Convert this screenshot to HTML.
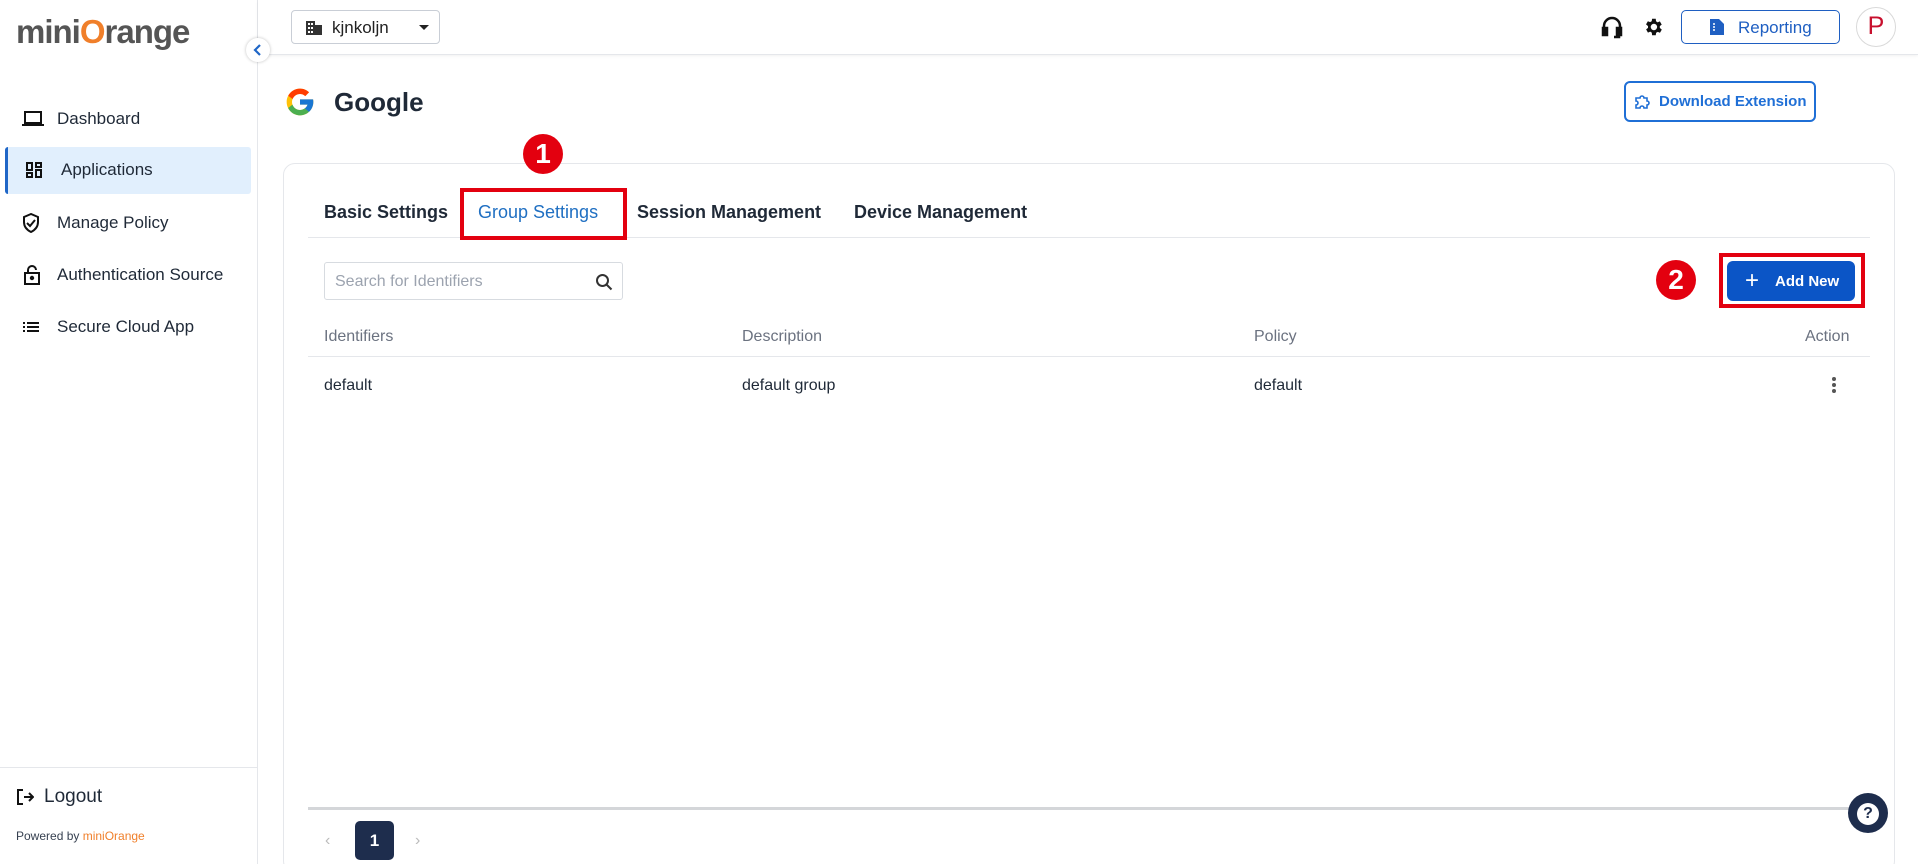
<!DOCTYPE html>
<html><head><meta charset="utf-8"><style>
*{box-sizing:border-box;margin:0;padding:0}
html,body{width:1918px;height:864px;overflow:hidden}
body{background:#fff;font-family:"Liberation Sans",Arial,sans-serif;color:#1f2937;position:relative}
.abs{position:absolute}
.side{left:0;top:0;width:258px;height:864px;border-right:1px solid #e5e7eb;background:#fff}
.nav{position:absolute;left:0;width:258px;height:46px;display:flex;align-items:center;font-size:17px;color:#1f2937}
.nav svg{position:absolute;left:22px}
.nav span{position:absolute;left:57px;top:13px}
.hdr{left:258px;top:0;width:1660px;height:55px;border-bottom:1px solid #e5e7eb;box-shadow:0 1px 3px rgba(0,0,0,.06)}
.tab{position:absolute;top:202px;font-size:18px;font-weight:bold;color:#1f2937}
.th{position:absolute;top:328px;font-size:16px;color:#6b7280}
.td{position:absolute;top:377px;font-size:16px;color:#1f2937}
.badge{position:absolute;width:40px;height:40px;border-radius:50%;background:#e3000f;color:#fff;font-size:28px;font-weight:bold;text-align:center;line-height:40px}
</style></head><body>

<div class="abs side">
  <div class="abs" style="left:16px;top:13px;font-size:33px;font-weight:bold;color:#555;letter-spacing:-1px">mini<span style="color:#f07f2a">O</span>range</div>
  <div class="nav" style="top:96px"><svg width="22" height="18" viewBox="0 0 22 18"><rect x="3" y="2" width="16" height="11" fill="none" stroke="#111" stroke-width="2"/><rect x="0" y="14" width="22" height="2" fill="#111"/></svg><span>Dashboard</span></div>
  <div class="abs" style="left:5px;top:147px;width:246px;height:47px;background:#e1effd;border-left:3px solid #1f66c7;border-radius:3px"></div>
  <div class="nav" style="top:147px"><svg style="left:26px" width="16" height="16" viewBox="0 0 16 16" fill="none" stroke="#111" stroke-width="2"><rect x="1" y="1" width="5" height="7"/><rect x="10" y="1" width="5" height="4"/><rect x="1" y="11" width="5" height="4"/><rect x="10" y="8" width="5" height="7"/></svg><span style="left:61px">Applications</span></div>
  <div class="nav" style="top:200px"><svg style="left:22px" width="18" height="20" viewBox="0 0 18 20" fill="none" stroke="#111" stroke-width="2"><path d="M9 1L2 4v5c0 5 3 8 7 10 4-2 7-5 7-10V4z"/><path d="M5 10l3 3 5-6"/></svg><span>Manage Policy</span></div>
  <div class="nav" style="top:252px"><svg style="left:24px" width="16" height="20" viewBox="0 0 16 20" fill="none" stroke="#111" stroke-width="2"><rect x="1" y="8" width="14" height="11"/><path d="M4 8V5a4 4 0 018 0"/><circle cx="8" cy="13" r="1.2" fill="#111"/></svg><span>Authentication Source</span></div>
  <div class="nav" style="top:304px"><svg style="left:23px" width="16" height="12" viewBox="0 0 16 12" fill="#111"><rect x="0" y="1" width="2" height="2"/><rect x="4" y="1" width="12" height="2"/><rect x="0" y="5" width="2" height="2"/><rect x="4" y="5" width="12" height="2"/><rect x="0" y="9" width="2" height="2"/><rect x="4" y="9" width="12" height="2"/></svg><span>Secure Cloud App</span></div>
  <div class="abs" style="left:0;top:767px;width:258px;height:1px;background:#e5e7eb"></div>
  <svg class="abs" style="left:16px;top:788px" width="18" height="18" viewBox="0 0 18 18" fill="none" stroke="#111" stroke-width="2"><path d="M7 2H2v14h5M8 9h9M13 5l4 4-4 4"/></svg>
  <div class="abs" style="left:44px;top:786px;font-size:19px;color:#1f2937">Logout</div>
  <div class="abs" style="left:16px;top:829px;font-size:12px;color:#374151">Powered by <span style="color:#f07f2a">miniOrange</span></div>
</div>
<div class="abs" style="left:246px;top:38px;width:24px;height:24px;border-radius:50%;background:#fff;box-shadow:0 0 3px rgba(0,0,0,.25);z-index:3"><svg width="24" height="24" viewBox="0 0 24 24"><path d="M14 7l-5 5 5 5" fill="none" stroke="#1f66c7" stroke-width="2.2"/></svg></div>

<div class="abs hdr">
  <div class="abs" style="left:33px;top:10px;width:149px;height:34px;border:1px solid #c9ced6;border-radius:4px">
    <svg class="abs" style="left:14px;top:10px" width="16" height="14" viewBox="0 0 16 14" fill="#333"><path d="M0 0h9v14H0zM9 4h7v10H9z"/><path d="M2 2h2v2H2zM5 2h2v2H5zM2 6h2v2H2zM5 6h2v2H5zM2 10h2v2H2zM5 10h2v2H5z" fill="#fff"/></svg>
    <div class="abs" style="left:40px;top:7px;font-size:17px;color:#222">kjnkoljn</div>
    <div class="abs" style="left:127px;top:14px;border-left:5px solid transparent;border-right:5px solid transparent;border-top:5px solid #222"></div>
  </div>
  <svg class="abs" style="left:1343px;top:15px" width="22" height="24" viewBox="0 0 22 24" fill="none" stroke="#111" stroke-width="2.5"><path d="M3 15V11a8 8 0 0116 0v4"/><rect x="2" y="13" width="4" height="7" fill="#111"/><rect x="16" y="13" width="4" height="7" fill="#111"/><path d="M18 20v2h-5"/></svg>
  <svg class="abs" style="left:1384px;top:16px" width="22" height="22" viewBox="0 0 24 24"><path fill="#111" d="M19.4 13a7.5 7.5 0 000-2l2.1-1.6-2-3.5-2.5 1a7 7 0 00-1.7-1L15 3h-4l-.4 2.7a7 7 0 00-1.7 1l-2.5-1-2 3.5L6.6 11a7.5 7.5 0 000 2l-2.1 1.6 2 3.5 2.5-1a7 7 0 001.7 1L11 21h4l.4-2.7a7 7 0 001.7-1l2.5 1 2-3.5zM13 15.5A3.5 3.5 0 1113 8.5a3.5 3.5 0 010 7z"/></svg>
  <div class="abs" style="left:1423px;top:10px;width:159px;height:34px;border:1.5px solid #1f5fc2;border-radius:5px">
    <svg class="abs" style="left:28px;top:8px" width="14" height="16" viewBox="0 0 14 16"><path d="M0 0h9l5 5v11H0z" fill="#1f5fc2"/><path d="M3 5h2M3 8h2M3 11h2" stroke="#fff" stroke-width="1.5"/></svg>
    <div class="abs" style="left:56px;top:7px;font-size:17px;color:#1f5fc2;font-weight:500">Reporting</div>
  </div>
  <div class="abs" style="left:1598px;top:7px;width:40px;height:40px;border-radius:50%;border:1.5px solid #d9d9d9;text-align:center;line-height:37px;font-size:25px;color:#c8102e">P</div>
</div>

<svg class="abs" style="left:284px;top:86px" width="32" height="32" viewBox="0 0 48 48"><path fill="#FFC107" d="M43.6 20H24v8h11.3C33.7 32.7 29.2 36 24 36c-6.6 0-12-5.4-12-12s5.4-12 12-12c3.1 0 5.8 1.2 7.9 3.1l5.7-5.7C34 6.1 29.3 4 24 4 13 4 4 13 4 24s9 20 20 20 20-9 20-20c0-1.3-.1-2.7-.4-4z"/><path fill="#FF3D00" d="M6.3 14.7l6.6 4.8C14.7 15.1 19 12 24 12c3.1 0 5.8 1.2 7.9 3.1l5.7-5.7C34 6.1 29.3 4 24 4 16.3 4 9.7 8.3 6.3 14.7z"/><path fill="#4CAF50" d="M24 44c5.2 0 9.9-2 13.4-5.2l-6.2-5.2C29.2 35.1 26.7 36 24 36c-5.2 0-9.6-3.3-11.3-8l-6.5 5C9.5 39.6 16.2 44 24 44z"/><path fill="#1976D2" d="M43.6 20H24v8h11.3c-.8 2.2-2.2 4.2-4.1 5.6l6.2 5.2C37 39.2 44 34 44 24c0-1.3-.1-2.7-.4-4z"/></svg>
<div class="abs" style="left:334px;top:87px;font-size:26px;font-weight:bold;color:#1f2937">Google</div>

<div class="abs" style="left:1624px;top:81px;width:192px;height:41px;border:2px solid #1f6fd6;border-radius:6px">
  <svg class="abs" style="left:8px;top:10px" width="18" height="18" viewBox="0 0 18 18" fill="none" stroke="#1f6fd6" stroke-width="1.6"><path d="M2 5h4a2 2 0 014 0h3v3a2 2 0 010 4v3h-3a2 2 0 00-4 0H2v-3a2 2 0 000-4z"/></svg>
  <div class="abs" style="left:33px;top:10px;font-size:15px;color:#1f6fd6;font-weight:bold">Download Extension</div>
</div>

<div class="abs" style="left:283px;top:163px;width:1612px;height:710px;border:1px solid #e5e7eb;border-radius:12px"></div>
<div class="tab" style="left:324px">Basic Settings</div>
<div class="tab" style="left:478px;color:#1f6fc2;font-weight:500">Group Settings</div>
<div class="tab" style="left:637px">Session Management</div>
<div class="tab" style="left:854px">Device Management</div>
<div class="abs" style="left:308px;top:237px;width:1562px;height:1px;background:#e5e7eb"></div>
<div class="abs" style="left:460px;top:188px;width:167px;height:52px;border:4px solid #e3000f"></div>
<div class="badge" style="left:523px;top:134px">1</div>

<div class="abs" style="left:324px;top:262px;width:299px;height:38px;border:1px solid #d7dbe0;border-radius:3px">
  <div class="abs" style="left:10px;top:10px;font-size:16px;color:#9ca3af">Search for Identifiers</div>
  <svg class="abs" style="left:270px;top:10px" width="18" height="18" viewBox="0 0 18 18" fill="none" stroke="#333" stroke-width="2"><circle cx="7.5" cy="7.5" r="5.5"/><path d="M11.5 11.5l5 5"/></svg>
</div>
<div class="badge" style="left:1656px;top:260px">2</div>
<div class="abs" style="left:1719px;top:253px;width:146px;height:55px;border:4px solid #e3000f"></div>
<div class="abs" style="left:1727px;top:261px;width:128px;height:40px;background:#0b55c6;border-radius:6px;color:#fff">
  <div class="abs" style="left:18px;top:6px;font-size:24px;font-weight:300">+</div>
  <div class="abs" style="left:48px;top:12px;font-size:15px;font-weight:bold">Add New</div>
</div>

<div class="th" style="left:324px">Identifiers</div>
<div class="th" style="left:742px">Description</div>
<div class="th" style="left:1254px">Policy</div>
<div class="th" style="left:1805px">Action</div>
<div class="abs" style="left:308px;top:356px;width:1562px;height:1px;background:#e5e7eb"></div>
<div class="td" style="left:324px">default</div>
<div class="td" style="left:742px">default group</div>
<div class="td" style="left:1254px">default</div>
<svg class="abs" style="left:1831px;top:376px" width="6" height="18" viewBox="0 0 6 18" fill="#555"><circle cx="3" cy="3" r="2"/><circle cx="3" cy="9" r="2"/><circle cx="3" cy="15" r="2"/></svg>

<div class="abs" style="left:308px;top:807px;width:1562px;height:3px;background:#d4d6d9"></div>
<div class="abs" style="left:325px;top:832px;font-size:16px;color:#bbb">‹</div>
<div class="abs" style="left:355px;top:821px;width:39px;height:39px;background:#1e2d4d;border-radius:5px;color:#fff;font-weight:bold;font-size:17px;text-align:center;line-height:39px">1</div>
<div class="abs" style="left:415px;top:832px;font-size:16px;color:#bbb">›</div>
<div class="abs" style="left:1848px;top:793px;width:40px;height:40px;border-radius:50%;background:#1e2d4d;color:#fff;text-align:center;line-height:40px;font-weight:bold;font-size:20px"><span style="display:inline-block;width:22px;height:22px;border-radius:50%;background:#fff;color:#1e2d4d;line-height:22px;font-size:16px;vertical-align:middle">?</span></div>
</body></html>
